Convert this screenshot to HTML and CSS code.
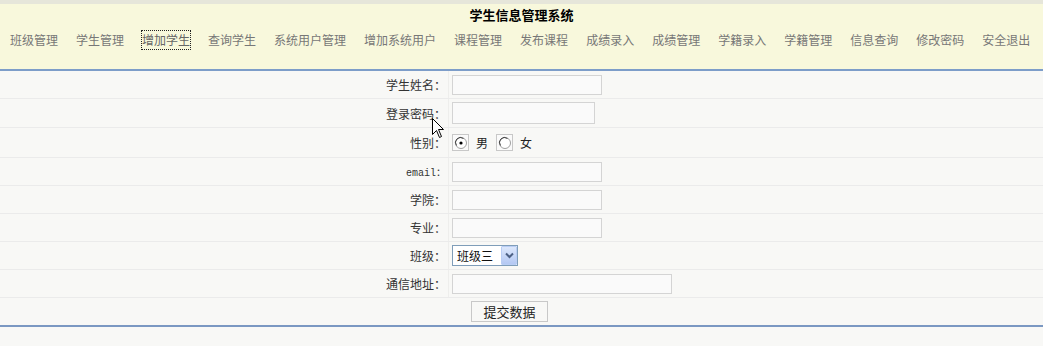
FILE: index.html
```html
<!DOCTYPE html>
<html lang="zh-CN">
<head>
    <meta charset="UTF-8">
    <title>学生信息管理系统</title>
    <link rel="stylesheet" href="styles.css">
</head>
<body>

    <!-- top bar with title and menu -->
    <div class="header">
        <div class="title">学生信息管理系统</div>
        <ul class="nav">
            <li><a href="#">班级管理</a></li>
            <li><a href="#">学生管理</a></li>
            <li><a href="#" class="focused">增加学生</a></li>
            <li><a href="#">查询学生</a></li>
            <li><a href="#">系统用户管理</a></li>
            <li><a href="#">增加系统用户</a></li>
            <li><a href="#">课程管理</a></li>
            <li><a href="#">发布课程</a></li>
            <li><a href="#">成绩录入</a></li>
            <li><a href="#">成绩管理</a></li>
            <li><a href="#">学籍录入</a></li>
            <li><a href="#">学籍管理</a></li>
            <li><a href="#">信息查询</a></li>
            <li><a href="#">修改密码</a></li>
            <li><a href="#">安全退出</a></li>
        </ul>
    </div>

    <!-- add student form -->
    <form class="student-form">
        <div class="row">
            <label class="cell-label">学生姓名：</label>
            <div class="cell-value"><input type="text" class="text-input"></div>
        </div>
        <div class="row row-tall">
            <label class="cell-label">登录密码：</label>
            <div class="cell-value"><input type="password" class="text-input pwd-input"></div>
        </div>
        <div class="row row-taller">
            <label class="cell-label">性别：</label>
            <div class="cell-value">
                <span class="radio-box">
                    <svg width="14" height="14" viewBox="0 0 14 14">
                        <circle cx="7" cy="7" r="5.5" fill="#fff" stroke="#a0a0a0"/>
                        <path d="M2.5 9.5 A5 5 0 0 1 9.5 2.5" fill="none" stroke="#404040" stroke-width="1"/>
                        <circle cx="7" cy="7" r="1.6" fill="#000"/>
                    </svg>
                </span>
                <span class="radio-text">男</span>
                <span class="radio-box">
                    <svg width="14" height="14" viewBox="0 0 14 14">
                        <circle cx="7" cy="7" r="5.5" fill="#fff" stroke="#a0a0a0"/>
                        <path d="M2.5 9.5 A5 5 0 0 1 9.5 2.5" fill="none" stroke="#404040" stroke-width="1"/>
                    </svg>
                </span>
                <span class="radio-text">女</span>
            </div>
        </div>
        <div class="row">
            <label class="cell-label mono">email：</label>
            <div class="cell-value"><input type="text" class="text-input"></div>
        </div>
        <div class="row">
            <label class="cell-label">学院：</label>
            <div class="cell-value"><input type="text" class="text-input"></div>
        </div>
        <div class="row">
            <label class="cell-label">专业：</label>
            <div class="cell-value"><input type="text" class="text-input"></div>
        </div>
        <div class="row">
            <label class="cell-label">班级：</label>
            <div class="cell-value">
                <div class="select-wrap">
                    <select class="class-select">
                        <option>班级一</option>
                        <option>班级二</option>
                        <option selected>班级三</option>
                    </select>
                    <span class="select-arrow">
                        <svg width="9" height="7" viewBox="0 0 9 7">
                            <path d="M1 1.5 L4.5 5 L8 1.5" fill="none" stroke="#4d6185" stroke-width="2"/>
                        </svg>
                    </span>
                </div>
            </div>
        </div>
        <div class="row">
            <label class="cell-label">通信地址：</label>
            <div class="cell-value"><input type="text" class="text-input addr-input"></div>
        </div>
        <div class="row row-submit">
            <button type="button" class="submit-btn">提交数据</button>
        </div>
    </form>

    <!-- mouse pointer seen in the screenshot -->
    <svg class="cursor" width="13" height="21" viewBox="0 0 13 21">
        <path d="M0.5 0.5 L0.5 16.5 L4.5 12.5 L7.5 19.5 L9.5 18.5 L6.5 11.5 L11.5 11.5 Z" fill="#fff" stroke="#000" stroke-width="1"/>
    </svg>

</body>
</html>
```

FILE: styles.css
```css
/* page */
body {
    margin: 0;
    background-color: #f8f8f6;
    font-family: "Noto Sans CJK SC", "Liberation Sans", sans-serif;
    font-size: 12px;
    color: #333;
    position: relative;
}

/* header */
.header {
    background-color: #f8f8dc;
    border-top: 4px solid #e6e6da;
    border-bottom: 2px solid #7d9dc9;
    padding-top: 3px;
    box-sizing: border-box;
    height: 71px;
}

.title {
    text-align: center;
    font-weight: bold;
    font-size: 13px;
    line-height: 16px;
    color: #000;
}

.nav {
    list-style: none;
    margin: 8px 0 0 0;
    padding: 0 0 0 10px;
    display: flex;
    gap: 18px;
}

.nav a {
    display: block;
    color: #777;
    text-decoration: none;
    font-size: 12px;
    line-height: 18px;
    white-space: nowrap;
}

.nav a.focused {
    outline: 1px dotted #222;
    outline-offset: 0;
    color: #666;
}

/* form table */
.student-form {
    border-bottom: 2px solid #7b98c2;
}

.row {
    display: grid;
    grid-template-columns: 449px 1fr;
    height: 28px;
    border-bottom: 1px solid #ebebeb;
    box-sizing: border-box;
}

.row-tall {
    height: 29px;
}

.row-taller {
    height: 30px;
}

.cell-label {
    display: flex;
    align-items: center;
    justify-content: flex-end;
    padding-right: 2px;
    border-right: 1px solid #eeeeec;
    color: #333;
    white-space: nowrap;
}

.cell-label.mono {
    font-family: "Liberation Mono", "Noto Sans CJK SC", monospace;
    font-size: 10px;
}

.cell-value {
    display: flex;
    align-items: center;
    padding-left: 3px;
}

.text-input {
    width: 150px;
    height: 20px;
    box-sizing: border-box;
    border: 1px solid #d4d4d4;
    background-color: #fafafa;
    padding: 0 2px;
    margin: 0;
}

.pwd-input {
    width: 143px;
    height: 22px;
}

.addr-input {
    width: 220px;
}

/* radio buttons */
.radio-box {
    display: inline-flex;
    align-items: center;
    justify-content: center;
    width: 17px;
    height: 17px;
    box-sizing: border-box;
    border: 1px solid #c8c8c8;
    background-color: #fafafa;
}

.radio-text {
    margin: 0 8px 0 7px;
    color: #222;
}

/* class select */
.select-wrap {
    position: relative;
    width: 66px;
    height: 21px;
}

.class-select {
    appearance: none;
    width: 100%;
    height: 100%;
    box-sizing: border-box;
    border: 1px solid #7f9db9;
    background-color: #fff;
    font-family: "Noto Sans CJK SC", sans-serif;
    font-size: 12px;
    color: #111;
    padding: 0 0 0 4px;
    margin: 0;
}

.select-arrow {
    position: absolute;
    right: 1px;
    top: 1px;
    bottom: 1px;
    width: 16px;
    display: flex;
    align-items: center;
    justify-content: center;
    background: linear-gradient(#dce7fb, #b4c8f3);
    border: 1px solid #b9cdf4;
    box-sizing: border-box;
    border-radius: 1px;
}

/* submit row */
.row-submit {
    display: flex;
    justify-content: center;
    align-items: center;
    padding-right: 24px;
    border-bottom: none;
    height: 27px;
}

.submit-btn {
    width: 77px;
    height: 21px;
    border: 1px solid #c8c8c8;
    background-color: #f8f8f6;
    font-family: "Noto Sans CJK SC", sans-serif;
    font-size: 13px;
    color: #222;
    padding: 0;
    line-height: 19px;
}

.cursor {
    position: absolute;
    left: 432px;
    top: 118px;
}
```
